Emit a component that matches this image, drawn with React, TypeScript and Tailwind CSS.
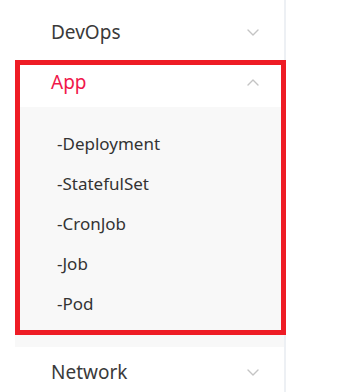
import React from "react";

function Chevron({ up }: { up?: boolean }) {
  return (
    <svg width="12" height="7" viewBox="0 0 12 7" fill="none" className={up ? "rotate-180" : ""}>
      <path d="M1 1l5 5 5-5" stroke="#c4c4c4" strokeWidth="1.4" strokeLinecap="round" strokeLinejoin="round" />
    </svg>
  );
}

function MenuRow({ label, open, active }: { label: string; open?: boolean; active?: boolean }) {
  return (
    <div className="h-[50px] flex items-center justify-between pl-[36px] pr-[25px] bg-white">
      <span className={`text-[19px] leading-none ${active ? "text-[#f0174b]" : "text-[#3a3a3a]"}`}>{label}</span>
      <Chevron up={open} />
    </div>
  );
}

const subItems = ["-Deployment", "-StatefulSet", "-CronJob", "-Job", "-Pod"];

export default function App() {
  return (
    <div className="w-[354px] h-[392px] bg-white overflow-hidden" style={{ fontFamily: '"Noto Sans", "Open Sans", sans-serif' }}>
      <div className="w-[286px] h-full border-r-2 border-[#edf0f4] pl-[15px] pt-[7px]">
        {/* DevOps */}
        <MenuRow label="DevOps" />

        {/* App, expanded and highlighted */}
        <div className="relative">
          <MenuRow label="App" open active />
          <div className="bg-[#f8f8f8] pt-[17px] pb-[23px]">
            {subItems.map((item) => (
              <div key={item} className="h-[40px] flex items-center pl-[42px] text-[17px] text-[#333]">
                {item}
              </div>
            ))}
          </div>
          <div className="absolute left-0 right-[-2px] top-[3px] bottom-[12px] border-[5px] border-[#ee1c25] pointer-events-none" />
        </div>

        {/* Network */}
        <MenuRow label="Network" />
      </div>
    </div>
  );
}
